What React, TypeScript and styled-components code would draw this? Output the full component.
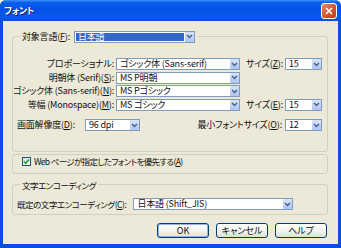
import React from "react";
import styled, { createGlobalStyle } from "styled-components";

const GlobalStyle = createGlobalStyle`
  html, body {
    margin: 0;
    padding: 0;
    background: #ffffff;
  }
  body {
    font-family: "Noto Sans CJK JP", "Liberation Sans", sans-serif;
    font-size: 9px;
    color: #000;
  }
`;

const Window = styled.div`
  width: 341px;
  height: 248px;
  display: flex;
  flex-direction: column;
  background: #0a4ee0;
  border-radius: 6px 6px 0 0;
  overflow: hidden;
`;

const TitleBar = styled.div`
  height: 21px;
  flex: 0 0 21px;
  display: flex;
  align-items: center;
  justify-content: space-between;
  padding: 0 4px 0 4px;
  background: linear-gradient(
    to bottom,
    #3d95ff 0%,
    #0a5fee 12%,
    #0551e6 45%,
    #0759e8 80%,
    #0b4fd8 100%
  );
`;

const Title = styled.span`
  color: #ffffff;
  font-weight: 700;
  font-size: 9px;
  letter-spacing: -0.3px;
  font-feature-settings: "palt";
  text-shadow: 1px 1px 0 #0a1e7a;
`;

const CloseButton = styled.div`
  width: 14px;
  height: 14px;
  border: 1px solid #ffffff;
  border-radius: 3px;
  background: linear-gradient(135deg, #e8896a 0%, #d3552f 55%, #c0401c 100%);
  display: flex;
  align-items: center;
  justify-content: center;
`;

const Body = styled.div`
  flex: 1;
  margin: 0 3px 4px;
  background: #ece9d8;
  padding: 9px 10px 0 9px;
  display: flex;
  flex-direction: column;
`;

const Group = styled.fieldset<{ $pb: number }>`
  margin: 0;
  padding: 0 0 ${(p) => p.$pb}px 0;
  border: 1px solid #d0d0bf;
  border-radius: 3px;
  min-width: 0;
`;

const Caption = styled.legend`
  margin-left: 7px;
  padding: 0 2px;
  height: 13px;
  display: flex;
  align-items: center;
  gap: 4px;
`;

const Label = styled.span<{ $align?: string; $tight?: boolean }>`
  display: block;
  text-align: ${(p) => p.$align || "left"};
  white-space: nowrap;
  line-height: 12px;
  font-feature-settings: "palt";
  font-size: ${(p) => (p.$tight ? "8.5px" : "9px")};
  letter-spacing: ${(p) => (p.$tight ? "-0.45px" : "-0.2px")};
  color: #111;
`;

const CheckLabel = styled(Label)`
  letter-spacing: -0.65px;
`;

const FontGrid = styled.div`
  display: grid;
  grid-template-columns: 101px 124px 41px 37px;
  grid-auto-rows: 12px;
  column-gap: 2px;
  row-gap: 1.5px;
  margin-top: 15px;
`;

const ResRow = styled.div`
  display: flex;
  align-items: center;
  margin-top: 8.5px;
  padding: 0 5px 0 4px;
  height: 12px;
`;

const Spacer = styled.div`
  flex: 1;
`;

const SelectBox = styled.div<{ $w?: number }>`
  box-sizing: border-box;
  width: ${(p) => (p.$w ? `${p.$w}px` : "100%")};
  height: 12px;
  border: 1px solid #7f9db9;
  background: #ffffff;
  display: flex;
  align-items: stretch;
  flex: none;
`;

const SelectText = styled.span<{ $hl?: boolean }>`
  flex: 1;
  padding-left: 3px;
  line-height: 10px;
  white-space: nowrap;
  font-feature-settings: "palt";
  letter-spacing: -0.2px;
  background: ${(p) => (p.$hl ? "#316ac5" : "transparent")};
  box-shadow: ${(p) => (p.$hl ? "inset 0 0 0 1px #ffffff" : "none")};
  color: ${(p) => (p.$hl ? "#ffffff" : "#111111")};
`;

const Arrow = styled.span`
  width: 9px;
  flex: none;
  border-radius: 1px;
  background: linear-gradient(to bottom, #d6e3fd 0%, #bfd1fa 60%, #aec3f2 100%);
  display: flex;
  align-items: center;
  justify-content: center;
`;

const CheckBox = styled.fieldset`
  margin: 2px 0 0;
  padding: 0 0 0 9px;
  height: 20px;
  border: 1px solid #d0d0bf;
  border-radius: 3px;
  display: flex;
  align-items: center;
  gap: 3px;
  box-sizing: border-box;
  min-width: 0;
`;

const Check = styled.span`
  width: 9px;
  height: 9px;
  box-sizing: border-box;
  border: 1px solid #1c5180;
  background: linear-gradient(135deg, #dcdcd7 0%, #ffffff 100%);
  display: flex;
  align-items: center;
  justify-content: center;
`;

const EncGroup = styled(Group)`
  margin-top: 4px;
`;

const EncRow = styled.div`
  display: flex;
  align-items: center;
  gap: 7px;
  padding-left: 4px;
  margin-top: 7px;
  height: 12px;
`;

const ButtonRow = styled.div`
  display: flex;
  justify-content: flex-end;
  gap: 7px;
  margin-top: 8px;
  padding-right: 1px;
`;

const Button = styled.div<{ $default?: boolean }>`
  width: 52px;
  height: 15px;
  box-sizing: border-box;
  border: 1px solid #003c74;
  border-radius: 3px;
  background: linear-gradient(to bottom, #ffffff 0%, #f3f2ec 55%, #e2ded3 100%);
  box-shadow: ${(p) => (p.$default ? "inset 0 0 0 1px #98b4e6" : "none")};
  display: flex;
  align-items: center;
  justify-content: center;
  font-size: 9px;
  font-feature-settings: "palt";
  color: #111;
`;

const Chevron = () => (
  <svg width="7" height="5" viewBox="0 0 7 5">
    <path d="M1 1 L3.5 3.5 L6 1" fill="none" stroke="#4d6185" strokeWidth="1.5" />
  </svg>
);

const Select = ({ text, w, hl }: { text: string; w?: number; hl?: boolean }) => (
  <SelectBox $w={w}>
    <SelectText $hl={hl}>{text}</SelectText>
    <Arrow>
      <Chevron />
    </Arrow>
  </SelectBox>
);

const App = () => {
  return (
    <>
      <GlobalStyle />
      <Window>
        <TitleBar>
          <Title>フォント</Title>
          <CloseButton>
            <svg width="8" height="8" viewBox="0 0 8 8">
              <path d="M1 1 L7 7 M7 1 L1 7" stroke="#ffffff" strokeWidth="1.6" />
            </svg>
          </CloseButton>
        </TitleBar>
        <Body>
          <Group $pb={20}>
            <Caption>
              <Label>
                対象言語(<u>F</u>):
              </Label>
              <Select text="日本語" w={121} hl />
            </Caption>
            <FontGrid>
              <Label $align="right">プロポーショナル:</Label>
              <Select text="ゴシック体 (Sans-serif)" />
              <Label $align="right">
                サイズ(<u>Z</u>):
              </Label>
              <Select text="15" />

              <Label $align="right">
                明朝体 (Serif)(<u>S</u>):
              </Label>
              <Select text="MS P明朝" />
              <span />
              <span />

              <Label $align="right">
                ゴシック体 (Sans-serif)(<u>N</u>):
              </Label>
              <Select text="MS Pゴシック" />
              <span />
              <span />

              <Label $align="right">
                等幅 (Monospace)(<u>M</u>):
              </Label>
              <Select text="MS ゴシック" />
              <Label $align="right">
                サイズ(<u>E</u>):
              </Label>
              <Select text="15" />
            </FontGrid>
            <ResRow>
              <Label>
                画面解像度(<u>D</u>):
              </Label>
              <span style={{ width: 10 }} />
              <Select text="96 dpi" w={55} />
              <Spacer />
              <Label>
                最小フォントサイズ(<u>O</u>):
              </Label>
              <span style={{ width: 3 }} />
              <Select text="12" w={37} />
            </ResRow>
          </Group>
          <CheckBox>
            <Check>
              <svg width="7" height="7" viewBox="0 0 7 7">
                <path d="M1 3.5 L2.8 5.3 L6 1.5" fill="none" stroke="#21a121" strokeWidth="1.6" />
              </svg>
            </Check>
            <CheckLabel $tight>
              Web ページが指定したフォントを優先する(<u>A</u>)
            </CheckLabel>
          </CheckBox>
          <EncGroup $pb={4}>
            <Caption>
              <Label $tight>文字エンコーディング</Label>
            </Caption>
            <EncRow>
              <Label $tight>
                既定の文字エンコーディング(<u>C</u>):
              </Label>
              <Select text="日本語 (Shift_JIS)" w={160} />
            </EncRow>
          </EncGroup>
          <ButtonRow>
            <Button $default>OK</Button>
            <Button>キャンセル</Button>
            <Button>ヘルプ</Button>
          </ButtonRow>
        </Body>
      </Window>
    </>
  );
};

export default App;
